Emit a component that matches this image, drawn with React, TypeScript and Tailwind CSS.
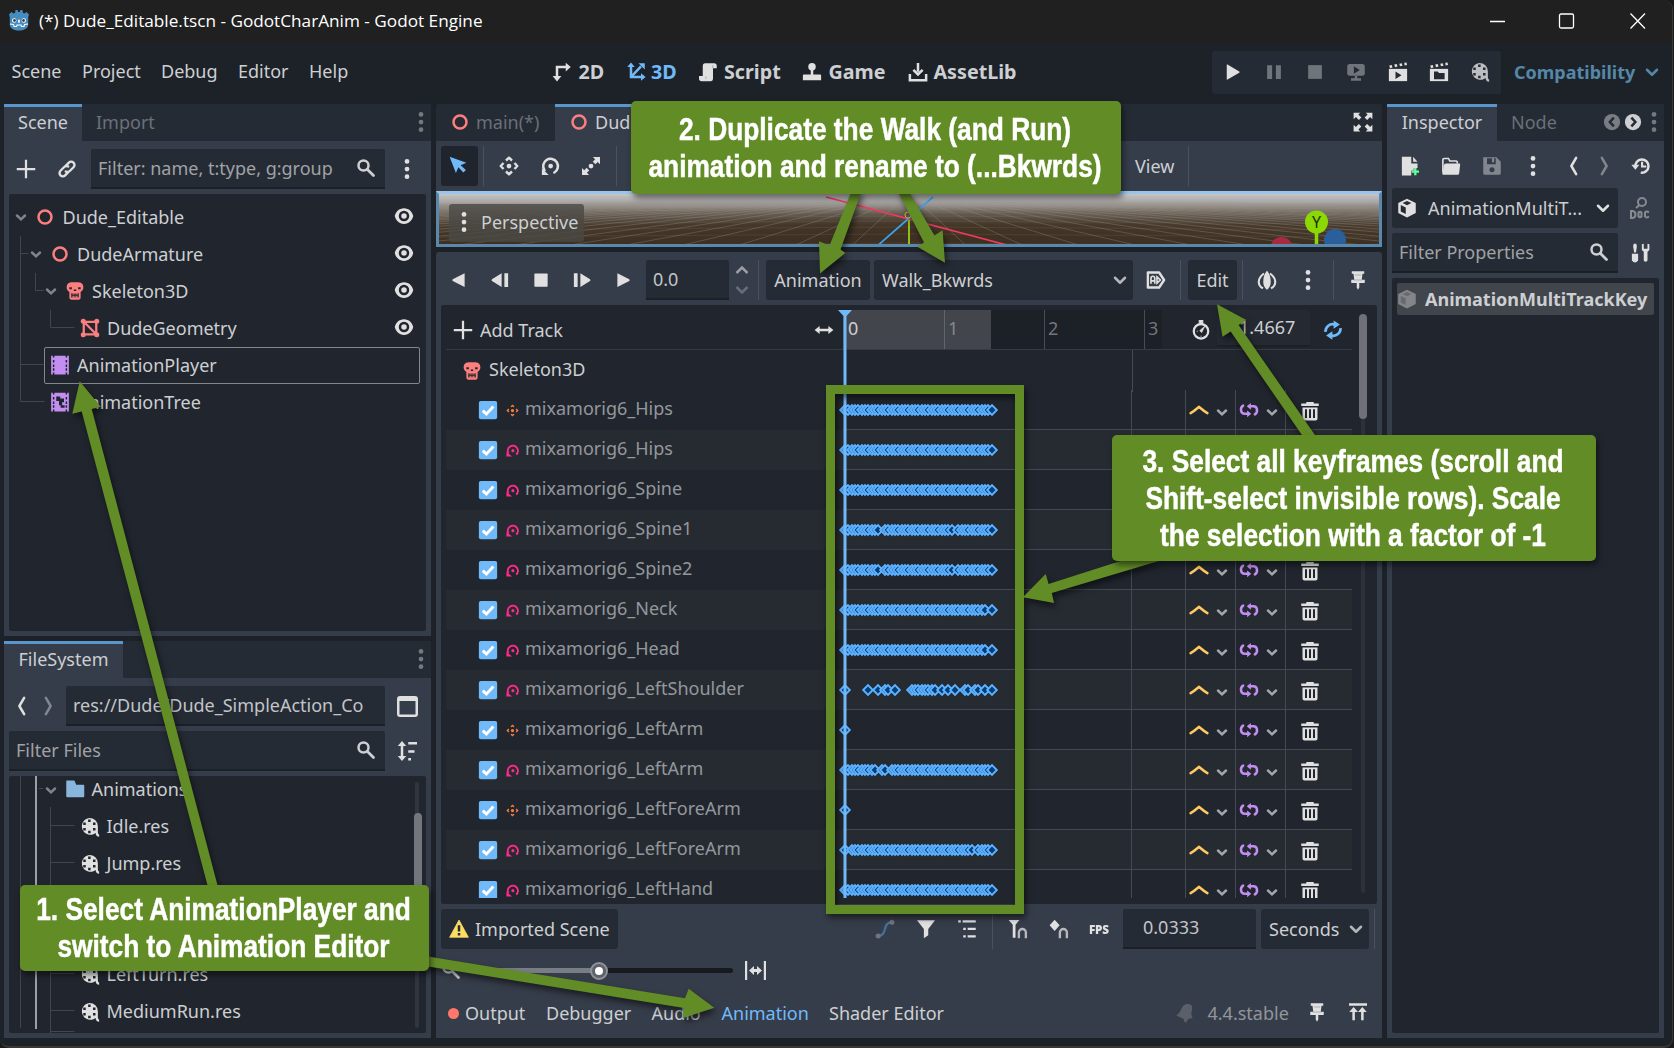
import React from "react";

type IconProps = { className?: string; children?: React.ReactNode };

/* 16-unit icon canvas drawn at 20px */
function Icon({ className = "text-[#e0e0e0]", children }: IconProps) {
  return (
    <svg viewBox="0 0 16 16" width="20" height="20" fill="currentColor" className={"block shrink-0 " + className}>
      {children}
    </svg>
  );
}

const Plus = () => <Icon><path d="M7.1.6v6.5H.6v1.8h6.5v6.500h1.800V8.900h6.500V7.100H8.900V.600z" /></Icon>;
const Chain = () => (
  <Icon>
    <g fill="none" stroke="currentColor" strokeWidth="1.9" strokeLinecap="round">
      <path d="M7.200 5.300l2.300-2.400a2.600 2.600 0 0 1 3.700 3.700L10.200 9.600a2.600 2.600 0 0 1-3.200.400" />
      <path d="M8.800 10.700l-2.300 2.400a2.600 2.600 0 0 1-3.700-3.700L5.800 6.400a2.600 2.600 0 0 1 3.200-.400" />
    </g>
  </Icon>
);
const Search = ({ className }: IconProps) => (
  <Icon className={className ?? "text-[#cdcfd2]"}>
    <circle cx="6" cy="6" r="4" fill="none" stroke="currentColor" strokeWidth="2" />
    <path d="M9 9l5 5" stroke="currentColor" strokeWidth="2.200" strokeLinecap="round" />
  </Icon>
);
const Dots = ({ className }: IconProps) => (
  <Icon className={className}>
    <circle cx="8" cy="1.900" r="1.900" /><circle cx="8" cy="8" r="1.900" /><circle cx="8" cy="14.100" r="1.900" />
  </Icon>
);
const Ring = () => <Icon className="text-[#fc7f7f]"><circle cx="8" cy="8" r="5.200" fill="none" stroke="currentColor" strokeWidth="2" /></Icon>;
const Skull = () => (
  <Icon className="text-[#fc7f7f]">
    <path fillRule="evenodd" d="M5 1h6c2.400 0 3.700 1.700 3.700 4 0 1.800-.8 3-2.200 3.700V13.200c0 1-.7 1.800-1.700 1.800H5.200c-1 0-1.700-.8-1.700-1.800V8.700C2.100 8 1.300 6.800 1.300 5c0-2.300 1.300-4 3.700-4zM3.500 5v1.600h2V5zm7 0v1.600h2V5zM7 6.800v1.200h2V6.800zM5 9.800v3.400h1v-1.500h1v1.500h.6v-1.500h.8v1.500H9v-1.500h1v1.500h1V9.800h-1v1H9v-1h-.6v1h-.8v-1H7v1H6v-1z" />
  </Icon>
);
const Mesh = () => (
  <Icon className="text-[#fc7f7f]">
    <path d="M3 3h10v10H3zM3 3l10 10" fill="none" stroke="currentColor" strokeWidth="1.800" />
    <circle cx="2.600" cy="2.600" r="2" /><circle cx="13.400" cy="2.600" r="2" /><circle cx="2.600" cy="13.400" r="2" /><circle cx="13.400" cy="13.400" r="2" />
  </Icon>
);
const filmPath = "M3.500.500h9V2h1.200V.500h1.400v15h-1.400V14h-1.200v1.500h-9V14H2.300v1.500H.900V.500h1.400V2h1.200zM2.300 4v2h1.200V4zm0 3.500v2h1.200v-2zm0 3v2h1.200v-2zM12.500 4v2h1.200V4zm0 3.500v2h1.200v-2zm0 3v2h1.200v-2z";
const Film = () => <Icon className="text-[#c38ef1]"><path fillRule="evenodd" d={filmPath} /></Icon>;
const FilmTree = () => (
  <Icon className="text-[#c38ef1]">
    <path fillRule="evenodd" d={filmPath} />
    <path d="M5 3.500h3.200v1.700h3v3H9.700v2.300h2v2H8.500v-2H7.200V7.200H5z" fill="#21262e" />
  </Icon>
);
const Eye = () => (
  <Icon>
    <path fillRule="evenodd" d="M8 1.700C4 1.700 1.400 4.600.6 8 1.400 11.400 4 14.300 8 14.300S14.600 11.400 15.400 8C14.600 4.600 12 1.700 8 1.700zm0 2.100a4.200 4.200 0 1 1 0 8.400 4.200 4.200 0 0 1 0-8.400z" />
    <circle cx="8" cy="8" r="2.200" />
  </Icon>
);
const Down = ({ className = "text-[#b4b6ba]" }: IconProps) => (
  <Icon className={className}><path d="M4 6.200l4 4 4-4" fill="none" stroke="currentColor" strokeWidth="2" strokeLinecap="round" strokeLinejoin="round" /></Icon>
);
const Caret = ({ className = "text-[#80848b]" }: IconProps) => (
  <Icon className={className}><path d="M4.800 6.800L8 9.900l3.200-3.100" fill="none" stroke="currentColor" strokeWidth="2" strokeLinecap="round" /></Icon>
);
const Left = ({ className }: IconProps) => <Icon className={className}><path d="M9.700 1.500L5.900 8l3.800 6.500" fill="none" stroke="currentColor" strokeWidth="2" strokeLinecap="round" strokeLinejoin="round" /></Icon>;
const Right = ({ className = "text-[#82868e]" }: IconProps) => <Icon className={className}><path d="M6.300 1.500L10.100 8l-3.800 6.500" fill="none" stroke="currentColor" strokeWidth="2" strokeLinecap="round" strokeLinejoin="round" /></Icon>;
const Reel = ({ className }: IconProps) => (
  <Icon className={className}>
    <path fillRule="evenodd" d="M7.500.700a6.800 6.800 0 0 1 6.800 6.800v4.500c0 1 .2 1.700 1 2v1.700c-1.700 0-2.800-1-2.800-2.900A6.800 6.800 0 1 1 7.500.700zM6.500 2v2h2V2zm0 9v2h2v-2zM2.600 4.300v2h2v-2zm7.800 0v2h2v-2zM2.600 8.800v2h2v-2zm7.800 0v2h2v-2z" />
  </Icon>
);
const FolderBlue = () => <Icon className="text-[#88b6dd]"><path d="M1 1.800Q1 1.200 1.600 1.200H7.500L9 4.500h5.800q.6 0 .6.600v8.600q0 .8-.8.800H1.800q-.8 0-.8-.8z" /></Icon>;
const Pin = () => <Icon><path d="M3 1v2h1.400l.6 4.700H2.600v2.600H7V14l1 1.800L9 14v-3.700h4.400V7.700H11L11.600 3H13V1z" /><path d="M5.500 4h5M4.500 8h7" stroke="#8a8d93" strokeWidth=".5" /></Icon>;
const Warn = () => (
  <Icon className="text-[#ffdd65]"><path d="M8 .8L15.500 14.600H.500z" strokeLinejoin="round" stroke="currentColor" strokeWidth=".6" /><path d="M7 5h2v5H7zM7 11.200h2v2H7z" fill="#252b34" /></Icon>
);
const Cube = ({ className, face = "#252b34" }: IconProps & { face?: string }) => (
  <Icon className={className}><path d="M8 .500l7 3.500v8L8 15.500 1 12V4z" /><path d="M3 5.500l4 2v5.300l-4-2zM4.500 4L8 2.300 11.500 4 8 5.700z" fill={face} /></Icon>
);
const MoveArrows = ({ className }: IconProps) => (
  <Icon className={className}>
    <circle cx="8" cy="8" r="1.900" />
    <path d="M5.600 3.600L8 1.400l2.400 2.200M5.600 12.400L8 14.600l2.400-2.200M3.600 5.600L1.400 8l2.200 2.400M12.400 5.600L14.600 8l-2.200 2.400" fill="none" stroke="currentColor" strokeWidth="1.900" strokeLinejoin="round" />
  </Icon>
);
const Rotate = ({ className }: IconProps) => (
  <Icon className={className}>
    <circle cx="8.500" cy="8" r="1.900" />
    <path d="M11.500 13.200A5.900 5.900 0 1 0 3.600 11.500" fill="none" stroke="currentColor" strokeWidth="2" strokeLinecap="round" />
    <path d="M1.500 10V15.200H7z" />
  </Icon>
);
const ScaleIcon = () => (
  <Icon><circle cx="8" cy="8" r="1.900" /><path d="M9.500.800h5.700v5.700l-1.800-1.800L11.500 6.600 9.400 4.500l1.900-1.900zM6.500 15.200H.800V9.500l1.800 1.800 1.900-1.900 2.100 2.100-1.900 1.900z" /></Icon>
);
const Trash = () => (
  <Icon><path d="M5 .700h6v1.300h4v2H1v-2h4zM2 5.200h12V14q0 1.500-1.500 1.500h-9Q2 15.500 2 14z" /><path d="M4 6.500h1.600v7H4zM7.200 6.500h1.600v7H7.200zM10.400 6.500H12v7h-1.600z" fill="#21262e" /></Icon>
);
const KeyInterp = () => <Icon className="text-[#ffca5f]"><path d="M1.300 10.500C4 9 6 7.200 8 5.500c2 1.700 4 3.500 6.700 5" fill="none" stroke="currentColor" strokeWidth="2" strokeLinecap="round" /></Icon>;
const LoopWrap = () => (
  <Icon className="text-[#c38ef1]">
    <path d="M3.300 4.500C.7 6 1 11 4.500 11H7M12.700 11.500C15.300 10 15 5 11.500 5H9" fill="none" stroke="currentColor" strokeWidth="2" strokeLinecap="round" />
    <path d="M6.500 8.300L9.800 11l-3.300 2.700zM9.500 2.300L6.200 5l3.300 2.700z" />
  </Icon>
);
const Check = () => (
  <Icon className="text-[#70bafa]"><rect x=".7" y=".7" width="14.600" height="14.600" rx="1.600" /><path d="M3.800 8.500l2.900 2.700 5.600-6" fill="none" stroke="#fff" strokeWidth="2.200" /></Icon>
);
const Clapper = ({ folder }: { folder?: boolean }) => (
  <Icon>
    <path d="M1 2.800l2-.4.6 2-2 .5zM5 2l2-.4.600 2-2 .5zM9 1.300l2-.4.600 2-2 .5zM13 .6l1.800-.3.400 2-1.900.5z" />
    <path d="M.700 5.500h14.600v9.800H.700z" />
    {folder ? <path d="M4 7.500h3l1 1.200h4.500v5H4z" fill="#252b34" /> : <path d="M6 7.500v6l4.800-3z" fill="#252b34" />}
  </Icon>
);
const Sep = ({ className = "" }: IconProps) => <div className={"h-10 w-px shrink-0 bg-[#4b515d] " + className} />;

function GodotHead() {
  return (
    <svg viewBox="0 0 22 22" width="22" height="22" className="shrink-0">
      <path d="M1 5.500L3.500 3l2 1.500 1.700-.7L7.500 1h2l.8 2h1.400l.8-2h2l.3 2.800 1.700.7 2-1.500L21 5.500l-.8 2.500v7.500c0 4-4.700 6-9.200 6s-9.200-2-9.200-6V8z" fill="#478cbf" />
      <circle cx="6.200" cy="11.500" r="2.200" fill="#fff" /><circle cx="15.800" cy="11.500" r="2.200" fill="#fff" />
      <circle cx="6.500" cy="11.500" r="1.400" fill="#414042" /><circle cx="15.500" cy="11.500" r="1.400" fill="#414042" />
      <rect x="10.200" y="10.500" width="1.600" height="3.500" rx=".8" fill="#fff" />
      <path d="M2 15l3.500.5.500 2h2.500l.5-1.500h4l.5 1.500H16l.5-2 3.500-.5" fill="none" stroke="#fff" strokeWidth="1.100" />
    </svg>
  );
}

function TitleBar() {
  return (
    <div className="flex h-[43px] shrink-0 items-center bg-[#202020] pl-2">
      <div className="w-[31px] pb-[3px]"><GodotHead /></div>
      <div className="w-[1451px] pb-[2px] font-['Open_Sans'] text-[17.200px] text-white">(*) Dude_Editable.tscn - GodotCharAnim - Godot Engine</div>
      <svg width="160" height="16" viewBox="0 0 160 16" fill="none" stroke="#fff" strokeWidth="1.300" className="mb-0.5">
        <path d="M0 8.500h15M140.500.500l14.500 15M155 .500l-14.500 15" /><rect x="69.500" y="1" width="14" height="14" rx="1.500" />
      </svg>
    </div>
  );
}

function MenuBar() {
  return (
    <div className="flex h-[61px] shrink-0 items-center pb-[3px] pl-[11.500px]">
      <div className="flex w-[540.500px] pb-[2px]">
        <div className="w-[70.500px]">Scene</div>
        <div className="w-[79px]">Project</div>
        <div className="w-[77px]">Debug</div>
        <div className="w-[71px]">Editor</div>
        <div>Help</div>
      </div>
      <div className="flex w-[660px] items-center text-[19.700px] font-bold">
        <div className="w-[26.500px]"><Icon><path d="M4 13V4h8" fill="none" stroke="currentColor" strokeWidth="2" /><path d="M11 .500l4 3.500-4 3.500zM.500 11.200h7L4 15.500z" /></Icon></div>
        <div className="w-[47px]">2D</div>
        <div className="w-[25.500px]">
          <Icon className="text-[#70bafa]"><path d="M4 3v9h8M4 12l8-8.500" fill="none" stroke="currentColor" strokeWidth="2" /><path d="M4 .300l3 3.700H1zM15.700 12l-3.700 3V9zM10 1h5v5z" /></Icon>
        </div>
        <div className="w-[47px] text-[#70bafa]">3D</div>
        <div className="w-[26px]"><Icon><path d="M5.500 1h7.800A2 2 0 0 1 15 3v2h-3v8.500A2 2 0 0 1 10 15.300H3A2.200 2.200 0 0 1 .8 13v-1.800h3V3A2 2 0 0 1 5.500 1z" /><path d="M6.300 11.500v2M11.800 2.500V5" stroke="#a8aaae" strokeWidth=".8" /></Icon></div>
        <div className="w-[78px]">Script</div>
        <div className="w-[26.500px]"><Icon><circle cx="8" cy="3.800" r="3" /><path d="M7 6h2v4h5.500q.8 0 .8.800v3.800H.700v-3.800q0-.8.800-.8H7z" /></Icon></div>
        <div className="w-[79px]">Game</div>
        <div className="w-[26px]"><Icon><path d="M1.500 9.500v5h13v-5M8 .700v7M4.300 6.300L8 10l3.700-3.700" fill="none" stroke="currentColor" strokeWidth="2" /></Icon></div>
        <div>AssetLib</div>
      </div>
      <div className="flex h-[43px] w-[289px] items-center justify-between rounded-[3px] bg-[#252b34] px-[11px]">
        <Icon><path d="M3 2.300v11.400q0 .6.600.3L13 8.500q.600-.5 0-.9L3.600 2q-.6-.3-.6.3z" /></Icon>
        <Icon className="text-[#70747b]"><path d="M2.500 2.500h4v11h-4zM9.500 2.500h4v11h-4z" /></Icon>
        <Icon className="text-[#70747b]"><rect x="2.500" y="2.500" width="11" height="11" /></Icon>
        <Icon className="text-[#70747b]"><rect x="1" y="1.500" width="14" height="9.500" rx="2" /><path d="M7 11h2v2h3v2H4v-2h3z" /><path d="M6.300 3.300v6l4.700-3z" fill="#252b34" /></Icon>
        <Clapper />
        <Clapper folder />
        <Reel className="text-[#bcbec1]" />
      </div>
      <div className="ml-[13px] w-[128px] font-bold text-[#5488a8]">Compatibility</div>
      <Down className="text-[#5488a8]" />
    </div>
  );
}

function TabDots() {
  return <div className="w-[20.500px] pb-px"><Dots className="text-[#74787f]" /></div>;
}

function Tab({ label, w, active, children }: { label: string; w: string; active?: boolean; children?: React.ReactNode }) {
  return (
    <div className={"flex h-full shrink-0 items-center justify-center border-t-[3px] pb-[5px] " + w + (active ? " border-[#5a96cc] bg-[#363d4a] text-[#cdcfd2]" : " border-transparent text-[#6b7079]")}>
      {children}
      {label}
    </div>
  );
}

function Field({ className = "", children }: IconProps) {
  return <div className={"flex h-10 shrink-0 items-center rounded-t-[2px] border-b-2 border-[#1b2027] bg-[#252b34] text-[#a0a2a6] " + className}>{children}</div>;
}

function SceneRow({ eye, selected, children }: { eye?: boolean; selected?: boolean; children: React.ReactNode }) {
  return (
    <div className={"flex h-[37px] items-center pb-[2px] " + (selected ? "relative" : "")}>
      {children}
      {selected && <div className="absolute left-[35px] top-0 h-[37px] w-[376px] rounded-[2px] border border-[#82868d]" />}
      {eye && <div className="ml-auto mr-[12px] pb-[2px]"><Eye /></div>}
    </div>
  );
}

function SceneDock() {
  return (
    <div className="flex h-[532px] flex-col rounded-t-[3px] bg-[#363d4a]">
      <div className="flex h-[37px] items-center rounded-t-[3px] bg-[#252b34]">
        <Tab label="Scene" w="w-[78px]" active />
        <div className="flex-1 pb-[2px] pl-[14px] text-[#6b7079]">Import</div>
        <TabDots />
      </div>
      <div className="mt-2 flex h-10 items-center pl-[12px]">
        <div className="w-[41px]"><Plus /></div>
        <div className="w-[34px]"><Chain /></div>
        <Field className="w-[294px] justify-between pl-[7px] pr-[9px]"><span>Filter: name, t:type, g:group</span><Search /></Field>
        <div className="ml-3"><Dots /></div>
      </div>
      <div className="relative mx-[5px] mt-[5px] h-[437px] rounded-[2px] bg-[#21262e] pt-[5px]">
        <svg className="absolute left-0 top-0" width="80" height="220" fill="none" stroke="#40454e" strokeWidth="1">
          <path d="M11.500 42v165.500M11.500 59.500h8M11.500 170.500h23M11.500 207.500h24M26.500 79v17.500h8M41.500 116v17.500h24" />
        </svg>
        <SceneRow eye><div className="ml-[2px] w-[23.500px]"><Caret /></div><div className="w-[28px]"><Ring /></div>Dude_Editable</SceneRow>
        <SceneRow eye><div className="ml-[17px] w-[23.500px]"><Caret /></div><div className="w-[27.500px]"><Ring /></div>DudeArmature</SceneRow>
        <SceneRow eye><div className="ml-[32px] w-[23.500px]"><Caret /></div><div className="w-[27.500px]"><Skull /></div>Skeleton3D</SceneRow>
        <SceneRow eye><div className="ml-[70.500px] w-[27.500px]"><Mesh /></div>DudeGeometry</SceneRow>
        <SceneRow selected><div className="ml-[40.500px] w-[27.500px]"><Film /></div>AnimationPlayer</SceneRow>
        <SceneRow><div className="ml-[40.500px] w-[27.500px]"><FilmTree /></div>AnimationTree</SceneRow>
      </div>
    </div>
  );
}

function FileRow({ name }: { name: string }) {
  return <div className="flex h-[37px] items-center pb-[2px] pl-[70.500px]"><div className="w-[27px] pt-[2px]"><Reel /></div>{name}</div>;
}

function FileDock() {
  return (
    <div className="mt-[5px] flex h-[397px] flex-col rounded-t-[3px] bg-[#363d4a]">
      <div className="flex h-[37px] items-center rounded-t-[3px] bg-[#252b34]">
        <Tab label="FileSystem" w="w-[119px]" active />
        <div className="flex-1" />
        <TabDots />
      </div>
      <div className="mt-2 flex h-10 items-center pl-[8px]">
        <div className="w-[26px]"><Left /></div>
        <div className="w-[28px]"><Right /></div>
        <Field className="w-[319px] pl-[7px] !text-[#c2c4c8]">res://Dude/Dude_SimpleAction_Co</Field>
        <svg width="21" height="21" className="ml-3"><path d="M3 0h15a3 3 0 0 1 3 3v15a3 3 0 0 1-3 3H3a3 3 0 0 1-3-3V3a3 3 0 0 1 3-3zm-.5 5v13.500h16V5z" fill="#e0e0e0" fillRule="evenodd" /></svg>
      </div>
      <div className="mt-[5px] flex h-10 items-center pl-[5px]">
        <Field className="w-[376px] justify-between pl-[7px] pr-[9px]"><span>Filter Files</span><Search /></Field>
        <div className="ml-[12px]">
          <Icon><path d="M4 0l3.400 4H5v8h2.400L4 16 .600 12H3V4H.600zM9 .800h7v2H9zM9 7.300h5v2H9zM9 13.500h2.200v2H9z" /></Icon>
        </div>
      </div>
      <div className="relative mx-[5px] mt-[5px] h-[257px] overflow-hidden rounded-[2px] bg-[#21262e]">
        <svg className="absolute left-0 top-0" width="80" height="257" fill="none" stroke="#40454e" strokeWidth="1">
          <path d="M11.500 0v252M30 12.500h4M41.500 31v226M41.500 49.500h24M41.500 86.500h24M41.500 197.500h24M41.500 234.500h24M41.500 255.500h24" />
          <path d="M27 0v253" stroke="#9c9fa4" strokeWidth="2" />
        </svg>
        <div className="absolute left-[406px] top-[6px] h-[246px] w-[4px] rounded bg-[#31363e]" />
        <div className="absolute left-[405px] top-[37px] h-[120px] w-[8px] rounded bg-[#73767b]" />
        <div className="-mt-[5px] flex h-[37px] items-center pb-[2px]"><div className="ml-[32px] w-[23.500px] pt-[2px]"><Caret /></div><div className="w-[27px] pt-px"><FolderBlue /></div>Animations</div>
        <FileRow name="Idle.res" />
        <FileRow name="Jump.res" />
        <div className="h-[74px]" />
        <FileRow name="LeftTurn.res" />
        <FileRow name="MediumRun.res" />
      </div>
    </div>
  );
}

const fan = Array.from({ length: 61 }, (_, i) => (i - 30) * 62);
const depth = [9, 11, 13, 16, 19, 23, 28, 34, 41, 50];

function Viewport() {
  return (
    <div className="relative h-14 overflow-hidden border-[3px] border-[#5b87ab] border-t-[#9bc4ea] bg-[#423627]">
      <svg className="absolute left-0 top-0" width="940" height="50" viewBox="0 0 940 50">
        <defs>
          <linearGradient id="haze" x1="0" x2="0" y1="0" y2="1">
            <stop offset="0" stopColor="#c4c5c8" /><stop offset=".16" stopColor="#aaa7a5" /><stop offset=".36" stopColor="#6e655b" /><stop offset=".62" stopColor="#483b2c" /><stop offset="1" stopColor="#3d3022" />
          </linearGradient>
          <radialGradient id="clear" cx=".5" cy=".7" r=".5">
            <stop offset="0" stopColor="#3d3022" stopOpacity=".8" /><stop offset="1" stopColor="#3d3022" stopOpacity="0" />
          </radialGradient>
        </defs>
        <rect width="940" height="50" fill="url(#haze)" />
        <rect x="130" y="4" width="680" height="60" fill="url(#clear)" />
        <g stroke="#a09a92" strokeWidth="1" opacity=".3">
          {fan.map((d) => <path key={d} d={`M${470 + d * 0.16} 8L${470 + d} 56`} />)}
        </g>
        <g stroke="#a09a92" strokeWidth="1" opacity=".13">
          {depth.map((y) => <path key={y} d={`M0 ${y + 2}L470 ${y - 1}L940 ${y + 2}`} fill="none" />)}
        </g>
        <path d="M387 3L579 54" stroke="#f03a5c" strokeWidth="1.700" />
        <path d="M494 3L436 54" stroke="#3ba3f0" strokeWidth="1.700" />
        <path d="M470 26v26" stroke="#8fbf10" strokeWidth="2" />
        <circle cx="469" cy="21" r="3" fill="none" stroke="#e0b040" />
        <circle cx="842.500" cy="54" r="11" fill="#a82a40" />
        <circle cx="896" cy="46" r="11" fill="#2a5f9c" />
        <path d="M877.500 28v26" stroke="#8bd805" strokeWidth="3.500" />
        <circle cx="877.500" cy="28" r="11.500" fill="#8bd805" />
        <text x="877.500" y="34" textAnchor="middle" fontFamily="Noto Sans" fontSize="16" fill="#233005">Y</text>
      </svg>
      <div className="absolute left-[10px] top-[10px] flex h-[38px] w-[135px] items-center rounded-[3px] bg-[#4a4845]/80 pb-[2px]">
        <div className="ml-[5px] w-[27px]"><Dots /></div>Perspective
      </div>
    </div>
  );
}

function SceneView() {
  return (
    <div className="flex h-[143px] flex-col">
      <div className="flex h-[37px] items-center rounded-t-[3px] bg-[#252b34]">
        <div className="flex h-full w-[119px] items-center border-t-[3px] border-transparent pb-[5px] pl-[14px] text-[#6b7079]"><Ring /><span className="ml-[6px]">main(*)</span></div>
        <div className="flex h-full w-[180px] items-center border-t-[3px] border-[#5a96cc] bg-[#363d4a] pb-[5px] pl-[14px]"><Ring /><span className="ml-[6px]">Dud</span></div>
        <div className="flex-1" />
        <div className="pb-px pr-[9px]">
          <Icon><path d="M.500.500h5.300L4.300 2l2.400 2.400-2 2L2.300 4 .500 5.800zM15.500.500h-5.300L11.700 2 9.300 4.400l2 2L13.700 4l1.800 1.800zM.500 15.500h5.300L4.300 14l2.400-2.400-2-2L2.300 12 .500 10.200zM15.500 15.500h-5.300l1.500-1.500-2.400-2.400 2-2 2.400 2.400 1.800-1.800z" /></Icon>
        </div>
      </div>
      <div className="flex h-[50px] items-center bg-[#363d4a] pl-[5px]">
        <div className="flex h-10 w-[37px] items-center justify-center rounded-[3px] bg-[#20252d] pb-[2px] pr-[3px]">
          <Icon className="text-[#70bafa]"><path d="M1.300 1.300l5 13 2-4.600 4 4.300 2-2-4.200-3.900 4.600-2z" /></Icon>
        </div>
        <Sep className="ml-[5px]" />
        <div className="ml-[15px] w-[41px] pb-px"><MoveArrows /></div>
        <div className="w-[41px] pb-px"><Rotate /></div>
        <div className="w-[35px] pb-px"><ScaleIcon /></div>
        <Sep />
        <div className="w-[518px]" />
        <div className="w-[53px]">View</div>
        <Sep />
      </div>
      <Viewport />
    </div>
  );
}

const all = Array.from({ length: 45 }, (_, i) => i);
const without = (...gone: number[]) => all.filter((f) => !gone.includes(f));

const tracks: { name: string; pos?: boolean; keys: number[] }[] = [
  { name: "mixamorig6_Hips", pos: true, keys: all },
  { name: "mixamorig6_Hips", keys: all },
  { name: "mixamorig6_Spine", keys: all },
  { name: "mixamorig6_Spine1", keys: without(11, 33) },
  { name: "mixamorig6_Spine2", keys: without(11, 33) },
  { name: "mixamorig6_Neck", keys: without(43) },
  { name: "mixamorig6_Head", keys: without(43) },
  { name: "mixamorig6_LeftShoulder", keys: [0, 7, 10, 12, 13, 15, 20, 21, 22, 23, 24, 25, 26, 27, 29, 31, 33, 36, 37, 39, 40, 42, 44] },
  { name: "mixamorig6_LeftArm", pos: true, keys: [0] },
  { name: "mixamorig6_LeftArm", keys: without(10, 13) },
  { name: "mixamorig6_LeftForeArm", pos: true, keys: [0] },
  { name: "mixamorig6_LeftForeArm", keys: without(1, 39) },
  { name: "mixamorig6_LeftHand", keys: all },
];

function Keys({ keys }: { keys: number[] }) {
  return (
    <svg width="164" height="16" className="absolute -left-[6px] top-[12px]" fill="#003e7a" stroke="#5fb2ff" strokeWidth="1.900">
      {keys.map((f) => {
        const x = 8 + Math.round((f * 10) / 3);
        return <path key={f} d={`M${x - 4.8} 8L${x} 3.200L${x + 4.8} 8L${x} 12.800z`} />;
      })}
    </svg>
  );
}

function Track({ name, pos, keys, odd }: { name: string; pos?: boolean; keys: number[]; odd: boolean }) {
  return (
    <div className={"flex h-10 shrink-0 " + (odd ? "bg-[#262b32]" : "")}>
      <div className="flex w-[397px] items-center pl-[31.500px]">
        <div className="w-[28px]"><Check /></div>
        <div className="w-[19.500px] pt-[1px]">
          <svg viewBox="0 0 16 16" width="13" height="13" className={pos ? "text-[#f5803e]" : "text-[#ff2b88]"} fill="currentColor">
            {pos ? (
              <path d="M8 6a2 2 0 1 1 0 4 2 2 0 0 1 0-4zM8 .500l2.500 2.500-1.200 1L8 3 6.700 4 5.500 3zM8 15.500l2.500-2.500-1.200-1L8 13l-1.300-1-1.200 1zM.500 8L3 5.500l1 1.200L3 8l1 1.300-1 1.200zM15.500 8L13 5.500l-1 1.200L13 8l-1 1.300 1 1.200z" />
            ) : (
              <><circle cx="8.500" cy="8.200" r="1.900" /><path d="M12.500 13A6.200 6.200 0 1 0 3 11.300" fill="none" stroke="currentColor" strokeWidth="2.400" /><path d="M.500 9.500v6H7.500z" /></>
            )}
          </svg>
        </div>
        <div className="pb-[5px] text-[#94979c]">{name}</div>
      </div>
      <div className="relative flex flex-1 border-b border-[#454a52]">
        <Keys keys={keys} />
        <div className="w-[289px] border-r border-[#454a52]" />
        <div className="flex w-[54px] border-r border-[#454a52]" />
        <div className="flex w-[50px] items-center border-r border-[#454a52] pl-[3px]"><KeyInterp /><div className="ml-[3px] mt-[5px]"><Caret className="text-[#a4a6aa]" /></div></div>
        <div className="flex w-[50px] items-center border-r border-[#454a52] pl-[3px]"><LoopWrap /><div className="ml-[3px] mt-[5px]"><Caret className="text-[#a4a6aa]" /></div></div>
        <div className="flex items-center pl-[13.500px] pt-[2px]"><Trash /></div>
      </div>
    </div>
  );
}

function Timeline() {
  return (
    <div className="relative mx-[5px] mt-[5px] h-[599px] overflow-hidden rounded-[2px] bg-[#21262e] pl-[5px] pt-[5px]">
      <div className="flex h-[588px] w-[906px] flex-col overflow-hidden">
        <div className="flex h-10 shrink-0 items-center border-b border-[#363b43]">
          <div className="ml-[7px] w-[27px]"><Plus /></div>
          <div className="w-[334px] pt-px">Add Track</div>
          <div className="w-[29px]"><Icon><path d="M.500 8l4-3.200v2.200h7V4.800l4 3.200-4 3.200V9h-7v2.200z" /></Icon></div>
          <div className="flex h-[39px] w-[319px] bg-[#1c2027]">
            <div className="flex w-[148px] bg-[#42454c]">
              <div className="w-[102px] border-r border-[#62656b] pl-[5px] pt-[6px]">0</div>
              <div className="pl-[3px] pt-[6px] text-[#85888d]">1</div>
            </div>
            <div className="w-[54px] border-r border-[#484c54]" />
            <div className="w-[100px] border-r border-[#484c54] pl-[3px] pt-[6px] text-[#73767c]">2</div>
            <div className="pl-[3px] pt-[6px] text-[#73767c]">3</div>
          </div>
          <div className="ml-[29px] w-[26px]">
            <Icon><circle cx="8" cy="9" r="5.800" fill="none" stroke="currentColor" strokeWidth="1.800" /><path d="M6.500 0h3v3h-3zM7 8.500L11 5l-2.500 5zM4.500 9h1M8 12.500v1" stroke="currentColor" strokeWidth=".6" /></Icon>
          </div>
          <div className="mb-[3px] flex h-[37px] w-[93px] items-center border-b-2 border-[#1b2027] bg-[#242932] pl-[22px]">1.4667</div>
          <div className="ml-[13px]">
            <Icon className="text-[#70bafa]"><path d="M2 9.500A5.800 5.800 0 0 1 9 3.500M14 6.500A5.800 5.800 0 0 1 7 12.500" fill="none" stroke="currentColor" strokeWidth="2.200" /><path d="M8.500.300L13.500 3.600 8.500 7zM7.500 9L2.500 12.400l5 3.300z" /></Icon>
          </div>
        </div>
        <div className="flex h-10 shrink-0 items-center pb-[2px] pl-[15.500px]">
          <div className="w-[27.500px] pt-[3px]"><Skull /></div>
          <div className="w-[643px]">Skeleton3D</div>
          <div className="h-[42px] w-px self-start bg-[#454a52]" />
        </div>
        {tracks.map((t, i) => <Track key={i} {...t} odd={i % 2 === 1} />)}
      </div>
      <svg className="absolute left-[397px] top-[5px]" width="14" height="588" fill="#70bafa"><path d="M0 0h14L8.500 6v582h-3V6z" /></svg>
      <div className="absolute left-[920px] top-[10px] h-[578px] w-[4px] rounded bg-[#2d323a]" />
      <div className="absolute left-[918px] top-[9px] h-[105px] w-[8px] rounded bg-[#6e7177]" />
    </div>
  );
}

function AnimToolbar() {
  return (
    <div className="mt-2 flex h-10 items-center pl-[13px]">
      <div className="w-[41px]"><Icon><path d="M12.500 2.500v11L3 8.700q-.8-.7 0-1.400z" /></Icon></div>
      <div className="w-[40.500px]"><Icon><path d="M9.300 2.500v11L1.600 8.700q-.8-.7 0-1.400zM11.500 2.500h3v11h-3z" /></Icon></div>
      <div className="w-[41px]"><Icon><rect x="2.700" y="2.700" width="10.600" height="10.600" rx=".6" /></Icon></div>
      <div className="w-[41px]"><Icon><path d="M6.700 2.500v11l7.700-4.800q.8-.7 0-1.400zM1.500 2.500h3v11h-3z" /></Icon></div>
      <div className="w-[33.500px]"><Icon><path d="M3.500 2.500v11L13 8.700q.8-.7 0-1.400z" /></Icon></div>
      <Field className="w-[83px] pl-[7px] !text-[#c2c4c8]">0.0</Field>
      <svg width="14" height="32" className="ml-[6px]" fill="none" strokeWidth="2.500"><path d="M1.500 9l5.500-5.500L12.500 9" stroke="#9a9da3" /><path d="M1.500 23L7 28.500l5.500-5.500" stroke="#686d77" /></svg>
      <Sep className="ml-[9px]" />
      <div className="ml-[7px] flex h-10 w-[104px] items-center justify-center rounded-[3px] bg-[#252b34]">Animation</div>
      <div className="ml-[4px] flex h-10 w-[259px] items-center justify-between rounded-[3px] bg-[#252b34] pl-[8px] pr-[3px]">Walk_Bkwrds<Down /></div>
      <div className="ml-[13px] w-[34px]">
        <Icon><path d="M1.500 2h9L14.500 8l-4 6h-9z" fill="none" stroke="currentColor" strokeWidth="1.900" strokeLinejoin="round" /><path d="M4 11V6.500Q4 5 5.500 5T7 6.500V11M4 8.700h3M8.800 5.500v5L11.500 8z" fill="none" stroke="currentColor" strokeWidth="1.300" /></Icon>
      </div>
      <Sep />
      <div className="ml-[7px] flex h-10 w-[49px] items-center justify-center rounded-[3px] bg-[#252b34]">Edit</div>
      <Sep className="ml-[5px]" />
      <div className="ml-[14px] w-[41px]">
        <Icon><path d="M8 .300C10.300 3.500 11 6 11 9.300Q11 13.500 8 15.700Q5 13.500 5 9.300C5 6 5.700 3.500 8 .300z" /><path d="M5.600 2.800C2.500 5.200 1.400 7 1.400 9.300Q1.400 13 4.800 14.600M10.400 2.800C13.500 5.200 14.600 7 14.600 9.300Q14.600 13 11.200 14.600" fill="none" stroke="currentColor" strokeWidth="1.700" /></Icon>
      </div>
      <div className="w-[35px]"><Dots /></div>
      <Sep />
      <div className="ml-[14px]"><Pin /></div>
    </div>
  );
}

function AnimFooter() {
  return (
    <>
      <div className="mt-[5px] flex h-10 items-center pl-[5px]">
        <div className="flex h-10 w-[177px] items-center rounded-[3px] bg-[#252b34] pl-[8px]"><div className="w-[26px]"><Warn /></div>Imported Scene</div>
        <div className="ml-[257px] w-[41px]">
          <Icon className="text-[#72767e]"><path d="M2.500 13.500C10.500 13.500 5.500 2.500 13.500 2.500" fill="none" stroke="#44719b" strokeWidth="1.800" /><circle cx="2.500" cy="13.500" r="2" /><circle cx="13.500" cy="2.500" r="2" /></Icon>
        </div>
        <div className="w-[41px]"><Icon><path d="M.800 1h14.400L9.800 8v5L6.300 15.300V8z" /></Icon></div>
        <div className="w-[35px]"><Icon><path d="M1 1h2v1.800H1zM4.500 1H15v1.800H4.500zM5 7h2v1.800H5zM8.500 7H15v1.800H8.500zM5 13h2v1.800H5zM8.500 13H15v1.800H8.500z" /></Icon></div>
        <Sep />
        <div className="ml-[15px] w-[41px]"><Icon><path d="M.500.800h8.700L6 4.500V15H3.800V4.500z" /><path d="M8.700 15.300v-4.500a2.800 2.800 0 0 1 5.600 0v4.500" fill="none" stroke="#b6b8bb" strokeWidth="1.900" /></Icon></div>
        <div className="w-[40px]"><Icon><path d="M4.500.500l4 4.500-4 4.500-4-4.500z" /><path d="M8.700 15.300v-4.500a2.800 2.800 0 0 1 5.600 0v4.500" fill="none" stroke="#b6b8bb" strokeWidth="1.900" /></Icon></div>
        <div className="w-[34px]"><div className="w-5 origin-left scale-x-[0.900] font-['Noto_Sans'] text-[13px] font-black leading-5 tracking-[-0.300px] text-[#e0e0e0]">FPS</div></div>
        <Field className="w-[133px] pl-[20px] !text-[#c2c4c8] pb-[2px]">0.0333</Field>
        <div className="ml-[5px] flex h-10 w-[108px] items-center justify-between rounded-[3px] bg-[#252b34] pl-[8px] pr-[3px]">Seconds<Down /></div>
        <Sep className="ml-[5px]" />
      </div>
      <div className="mt-px flex h-10 items-center pl-[5px]">
        <Search />
        <div className="relative ml-[8px] h-[5px] w-[264px] rounded bg-[#171a21]">
          <div className="h-[5px] w-[130px] rounded bg-[#797d85]" />
          <div className="absolute left-[121px] top-[-6px] size-[18px] rounded-full border-[2.500px] border-[#8f939a] bg-[#5d626c]" />
          <div className="absolute left-[126px] top-[-1px] size-[8px] rounded-full bg-white" />
        </div>
        <svg width="21" height="19" className="ml-[12px]" fill="#e0e0e0"><path d="M0 0h2.200v19H0zM18.800 0H21v19h-2.200zM4 9.500L9 5v3h3V5l5 4.500-5 4.500v-3H9v3z" /></svg>
      </div>
      <div className="mt-[3px] flex h-10 items-center pl-[12px]">
        <div className="mr-[6px] size-[11px] rounded-full bg-[#ff786b]" />
        <div className="w-[81px]">Output</div>
        <div className="w-[105.500px]">Debugger</div>
        <div className="w-[70px]">Audio</div>
        <div className="w-[107.500px] text-[#70bafa]">Animation</div>
        <div className="w-[346px]">Shader Editor</div>
        <div className="w-[32.500px]"><Icon className="text-[#5a5f69]"><path d="M9.500.800Q13.500.500 13.800 3.500L13 8.500l1 3.500-3.500.8-1.500 2.700-1.800-.7-.2-2L1 10Q2.500 8.800 3.500 7.500L6 3Q7.500.900 9.500.800z" /></Icon></div>
        <div className="w-[99.500px] text-[#92959b]">4.4.stable</div>
        <div className="w-[41px] pb-[3px]"><Pin /></div>
        <Icon className="mb-[3px] text-[#e0e0e0]"><path d="M.800 1h14.400v2H.800zM4.500 4L8 8H5.500v6.500h-2V8H1zM11.500 4L15 8h-2.500v6.500h-2V8H8z" /></Icon>
      </div>
    </>
  );
}

function Inspector() {
  return (
    <div className="flex h-[934px] w-[277px] flex-col rounded-t-[3px] bg-[#363d4a]">
      <div className="flex h-[37px] items-center rounded-t-[3px] bg-[#252b34]">
        <Tab label="Inspector" w="w-[110px]" active />
        <div className="w-[104.500px] pb-[2px] pl-[14px] text-[#6b7079]">Node</div>
        <div className="w-[21px] pb-px"><Icon className="text-[#7a7d83]"><circle cx="8" cy="8" r="6.500" /><path d="M9.500 4.500L6.300 8l3.200 3.500" fill="none" stroke="#252b34" strokeWidth="2" /></Icon></div>
        <div className="w-[21px] pb-px"><Icon className="text-[#cdcfd2]"><circle cx="8" cy="8" r="6.500" /><path d="M6.700 4.500L9.900 8l-3.200 3.500" fill="none" stroke="#252b34" strokeWidth="2" /></Icon></div>
        <TabDots />
      </div>
      <div className="mt-[4px] flex h-[41px] items-center pl-[12.500px]">
        <div className="w-[41px]"><Icon><path d="M1.500.500H9V6h5v3.500h-3v2H9v4H1.500zM10.500.500L14 4.500h-3.500z" /><path d="M11.300 9.500h1.900v2h2v1.900h-2v2h-1.900v-2h-2v-1.900h2z" fill="#5fff97" /></Icon></div>
        <div className="w-[41px]"><Icon><path d="M1.500 13V3q0-1 1-1H6l1 2h5q1 0 1 1v1" fill="none" stroke="currentColor" strokeWidth="1.300" /><path d="M4.500 6h10q1 0 .8 1l-.8 7q-.2 1-1.200 1H2q-1 0-1-1l1.500-7q.300-1 2-1z" /></Icon></div>
        <div className="w-[41px]"><Icon className="text-[#82868e]"><path fillRule="evenodd" d="M1 1h10.500L15 4.500V14q0 1-1 1H2q-1 0-1-1zM4 1.800v4.700h7V1.800H9.700V5H8V1.800zM8 9a2 2 0 1 0 0 4 2 2 0 0 0 0-4z" /></Icon></div>
        <div className="w-[41px]"><Dots /></div>
        <div className="w-[30px]"><Left /></div>
        <div className="w-[37px]"><Right /></div>
        <Icon><path d="M3.500 9A5.300 5.300 0 1 1 7.800 13.300" fill="none" stroke="currentColor" strokeWidth="2" /><path d="M.300 7h6.400l-3.200 4zM8 4.500h1.700v3h2.500v1.700H8z" /></Icon>
      </div>
      <div className="mt-[2px] flex h-10 items-center pl-[5px]">
        <div className="flex h-10 w-[226px] items-center rounded-[3px] bg-[#252b34] pl-[5px]">
          <div className="w-[31px]"><Cube /></div>
          <div className="w-[165px]">AnimationMultiT...</div>
          <Down className="text-[#e0e0e0]" />
        </div>
        <div className="ml-[12px]">
          <svg width="20" height="22" viewBox="0 0 20 22" fill="none" stroke="#868a91"><circle cx="12" cy="5" r="4" strokeWidth="2" /><path d="M9.500 8L6 11" strokeWidth="2.200" /><path d="M1 14v7h1.500q3-.5 3-3.500t-3-3.500zM8.500 15.500q1.500-1.500 3 0v4q-1.500 1.500-3 0zM19 15.500q-2.500-2-4 0v4q1.500 2 4 0" strokeWidth="2" /></svg>
        </div>
      </div>
      <div className="mt-[5px] flex h-10 items-center pl-[5px]">
        <Field className="w-[226px] justify-between pl-[7px] pr-[9px]"><span>Filter Properties</span><Search /></Field>
        <div className="ml-[12px]">
          <Icon><path d="M3 .500h2l.5 2L4.800 7.500h-1.500L2.500 2.500zM1.500 8.500h5V14q-2.500 3-5 0zM9.500 1v4.500l1.500 1.500v7q1.500 2 3 0V7l1.500-1.500V1L14 .500V4.500h-3V.500z" /></Icon>
        </div>
      </div>
      <div className="mx-[5px] mt-[5px] h-[755px] rounded-[2px] bg-[#21262e] p-[5px]">
        <div className="flex h-[32px] w-[257px] items-center rounded-[2px] bg-[#41454c] pb-px">
          <div className="w-[28px]"><Cube className="text-[#838589]" face="#676a6f" /></div>
          <span className="font-bold">AnimationMultiTrackKey</span>
        </div>
      </div>
    </div>
  );
}

function NoteLine({ children }: { children: string }) {
  return <div className="flex h-[37px] scale-x-[0.822] items-center justify-center">{children}</div>;
}

function Callouts() {
  return (
    <div className="pointer-events-none absolute inset-0 font-['Liberation_Sans'] text-[32px] font-bold text-white [-webkit-text-stroke:0.500px_#fff]">
      <svg className="absolute inset-0 drop-shadow-[2px_4px_3px_rgba(0,0,0,0.55)]" width="1674" height="1048" fill="#628c26">
        <path d="M79.700 381.300L100.700 406.700L91.700 409L218.500 889H208.500L81.700 411.500L72.300 413.700z" />
        <path d="M425 956L685 998.300L688.700 988.700L714.300 1007.700L682.600 1018.300L684 1008L425 966z" />
        <path d="M852 190L829.500 245.500L819 241.300L820 273.500L845.300 253L840.500 249.500L862 190z" />
        <path d="M897 190L924 242.500L917.700 247L945 262.800L942.600 230.300L934.500 235.500L908 190z" />
        <path d="M1217 304.300L1246.400 320L1238.600 325L1317 438H1304L1230.700 331.500L1222.500 336.700z" />
        <path d="M1022.900 597.300L1045.700 574L1048.600 584L1123.600 560H1162L1051.800 593L1054 603z" />
        <path fillRule="evenodd" d="M826 385h198v529H826zM835 394v511h180V394z" />
      </svg>
      <div className="absolute left-[631px] top-[101px] h-[93px] w-[490px] rounded-[5px] bg-[#628c26] pr-[2px] pt-[9px] shadow-[2px_4px_6px_rgba(0,0,0,0.5)]">
        <NoteLine>2. Duplicate the Walk (and Run)</NoteLine>
        <NoteLine>animation and rename to (...Bkwrds)</NoteLine>
      </div>
      <div className="absolute left-[20px] top-[885px] h-[86px] w-[409px] rounded-[5px] bg-[#628c26] pr-[2px] pt-[5px] shadow-[2px_4px_6px_rgba(0,0,0,0.5)]">
        <NoteLine>1. Select AnimationPlayer and</NoteLine>
        <NoteLine>switch to Animation Editor</NoteLine>
      </div>
      <div className="absolute left-[1112px] top-[435px] h-[126px] w-[484px] rounded-[5px] bg-[#628c26] pr-[2px] pt-[7px] shadow-[2px_4px_6px_rgba(0,0,0,0.5)]">
        <NoteLine>3. Select all keyframes (scroll and</NoteLine>
        <NoteLine>Shift-select invisible rows). Scale</NoteLine>
        <NoteLine>the selection with a factor of -1</NoteLine>
      </div>
    </div>
  );
}

export default function App() {
  return (
    <div className="relative h-[1048px] w-[1674px] overflow-hidden bg-[#1b1b1b] font-['Noto_Sans',sans-serif] text-[18px] leading-[24px] whitespace-nowrap text-[#cdcfd2]">
      <div className="flex h-[1048px] w-[1673px] flex-col overflow-hidden rounded-tr-[9px] rounded-b-[9px] border-r border-b-2 border-[#3a3835] bg-[#1d2229]">
        <TitleBar />
        <MenuBar />
        <div className="flex pl-1">
          <div className="w-[427px] shrink-0">
            <SceneDock />
            <FileDock />
          </div>
          <div className="mx-[5px] w-[946px] shrink-0">
            <SceneView />
            <div className="mt-[5px] h-[786px] rounded-t-[3px] bg-[#363d4a] pt-px">
              <div className="-mt-px"><AnimToolbar /></div>
              <Timeline />
              <AnimFooter />
            </div>
          </div>
          <Inspector />
        </div>
      </div>
      <Callouts />
    </div>
  );
}
